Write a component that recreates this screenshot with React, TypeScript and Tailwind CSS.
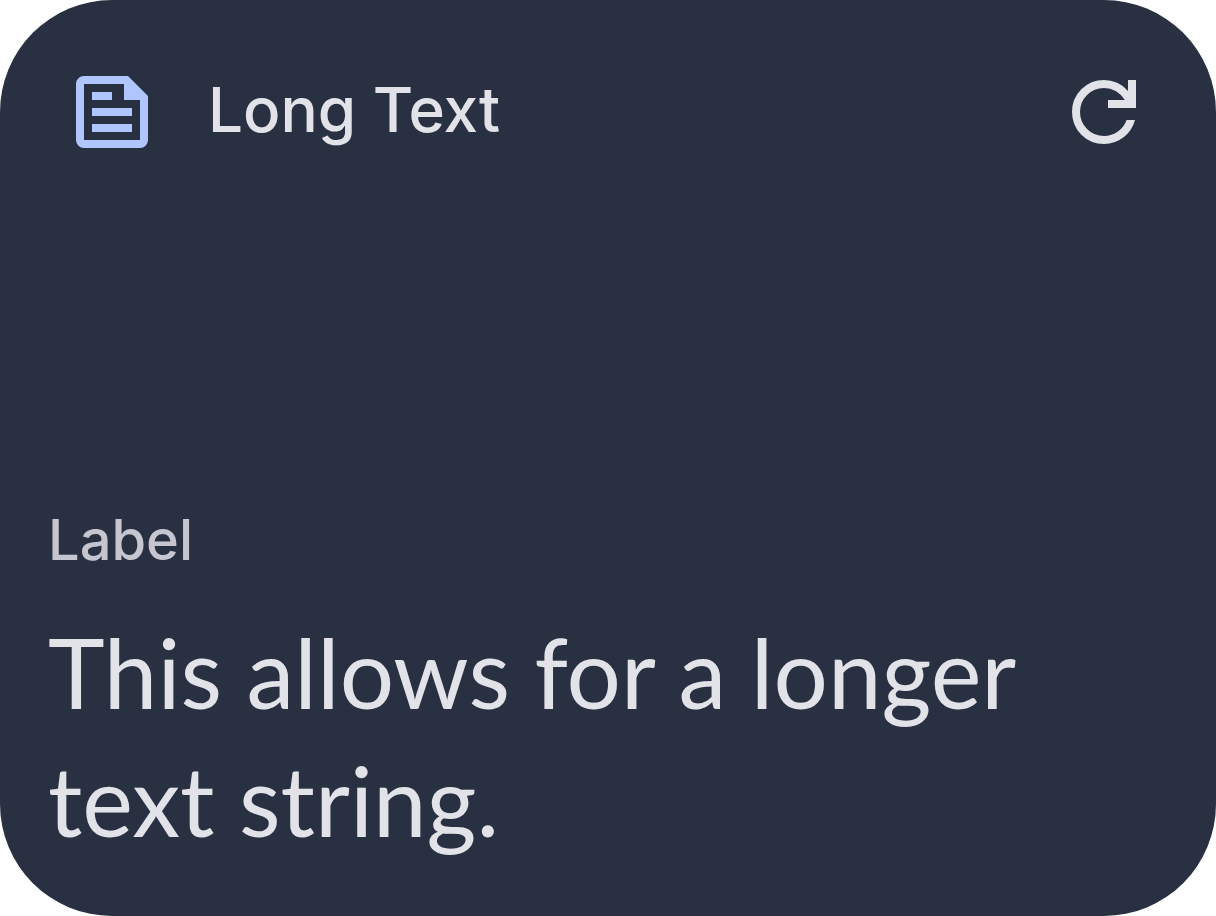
import React from "react";

export default function App() {
  return (
    <main className="flex min-h-screen flex-col justify-between rounded-[112px] bg-[#293041] px-12 pt-16 pb-13 font-['Inter',sans-serif] text-[#e2e2e9]">
      <header className="flex items-center justify-between px-4">
        <div className="flex items-center gap-12">
          <svg aria-hidden="true" className="size-24" viewBox="0 0 24 24">
            <path
              fill="#b0c6ff"
              fillRule="evenodd"
              d="M5 3H16L21 8V19Q21 19.825 20.413 20.413T19 21H5Q4.175 21 3.587 20.413T3 19V5Q3 4.175 3.587 3.587T5 3ZM5 5V19H19V9H15V5ZM7 7H12V9H7ZM7 11H17V13H7ZM7 15H17V17H7Z"
            />
          </svg>
          <h1 className="pb-1 text-[62px] leading-[92px] font-medium">Long Text</h1>
        </div>
        <button type="button" aria-label="Refresh" className="size-24">
          <svg aria-hidden="true" className="size-24" viewBox="0 0 24 24">
            <path
              fill="currentColor"
              d="M12 20Q8.65 20 6.325 17.675T4 12Q4 8.65 6.325 6.325T12 4Q13.725 4 15.3 4.713T18 6.75V4H20V11H13V9H17.2Q16.4 7.6 15.013 6.8T12 6Q9.5 6 7.75 7.75T6 12T7.75 16.25T12 18Q13.925 18 15.475 16.9T17.65 14H19.75Q19.05 16.65 16.9 18.325T12 20Z"
            />
          </svg>
        </button>
      </header>
      <section>
        <p className="text-[56px] leading-[80px] font-medium text-[#c5c6d0]">Label</p>
        <p className="mt-7 font-['Lato',sans-serif] text-[96px] leading-[128px]">This allows for a longer text string.</p>
      </section>
    </main>
  );
}
